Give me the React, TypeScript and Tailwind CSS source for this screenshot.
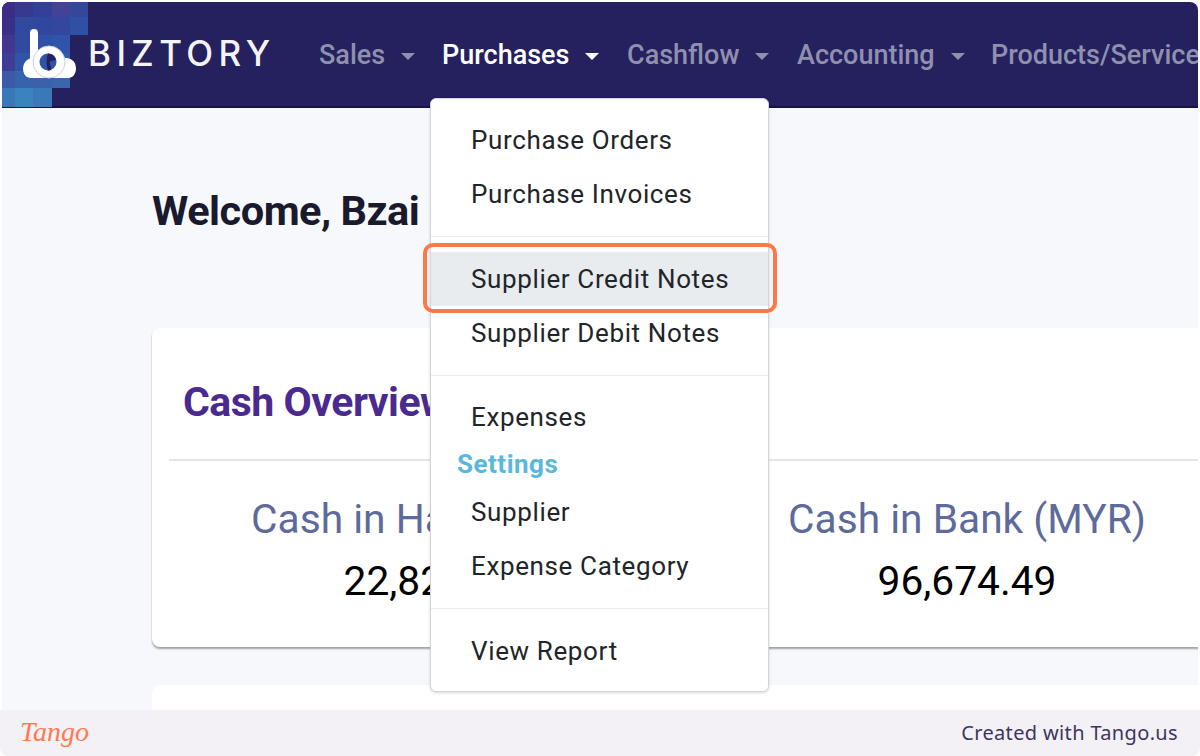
const roboto = "font-['Roboto',sans-serif]";

const mosaic = [
  { y: 2, h: 15, cols: ["#3d2c85", "#37398f", "#33409a", "#444296", "#35479b"] },
  { y: 17, h: 18, cols: ["#3b3088", "#2f4a9f", "#31479f", "#34479f", "#3050a6"] },
  { y: 35, h: 18, cols: ["#42368f", "#2f4a9f", "#2f50a6", "#3054aa"] },
  { y: 53, h: 18, cols: ["#3f3d96", "#2f55a8", "#2f58ac", "#2f5cae"] },
  { y: 71, h: 17, cols: ["#3d5aa8", "#3564ad", "#3a62ab", "#3a66ae"] },
  { y: 88, h: 19, cols: ["#3878b6", "#3a84bd", "#3a78b8"] },
];
const colX = [2, 15, 33, 52, 70];
const colW = [13, 18, 19, 18, 18];

function Mosaic() {
  return (
    <svg className="absolute left-[2px] top-[2px] rounded-tl-lg" width="88" height="105" viewBox="2 2 88 105">
      {mosaic.map((row) =>
        row.cols.map((c, i) => (
          <rect key={row.y + "-" + i} x={colX[i]} y={row.y} width={colW[i]} height={row.h} fill={c} />
        ))
      )}
    </svg>
  );
}

function LogoMark() {
  return (
    <svg className="absolute left-[22px] top-[27px]" width="56" height="54" viewBox="0 0 56 54">
      <path d="M1 41a10 10 0 0 1 10-10h34a9.500 9.500 0 0 1 9 10c0 6-3 10-8 10H9c-5 0-8-4-8-10z" fill="#fff" />
      <path d="M12 6v26" stroke="#fff" strokeWidth="8" strokeLinecap="round" fill="none" />
      <circle cx="27" cy="35" r="16" fill="#fff" stroke="#c9d0ea" strokeWidth="1" />
      <circle cx="26" cy="35" r="8.500" fill="#3054aa" />
      <path d="M26 26.500a8.500 8.500 0 0 1 8 6c-2 2-5 0-6 3s2 3 1 7.500a8.500 8.500 0 0 1-3 .5c-2-6-2-12 0-17z" fill="#25205e" />
    </svg>
  );
}

function NavItem({ label, active, className }: { label: string; active?: boolean; className: string }) {
  return (
    <div className={"flex items-center shrink-0 " + className}>
      <span className={active ? "text-white font-medium" : "text-[#8f90ae] font-medium"}>{label}</span>
      <span
        className={
          "ml-[16px] w-0 h-0 border-x-[7px] border-x-transparent border-t-[7px] mt-[2px] " +
          (active ? "border-t-white" : "border-t-[#8f90ae]")
        }
      />
    </div>
  );
}

function MenuItem({ label, hover }: { label: string; hover?: boolean }) {
  return (
    <div className={"h-[54px] flex items-center pl-[40px] " + (hover ? "bg-[#e9ecef]" : "")}>{label}</div>
  );
}

function Divider() {
  return <div className="h-px bg-[#e9ecef] my-[15px]" />;
}

export default function App() {
  return (
    <div className={"relative w-[1200px] h-[756px] overflow-hidden bg-white flex flex-col " + roboto}>
      <div className="flex-1 min-h-0 mx-[2px] mt-[2px] rounded-t-lg overflow-hidden bg-[#f7f8fc] flex flex-col">
        <header className="shrink-0 h-[106px] bg-[#25205e] border-b-2 border-[#17124e] flex items-center overflow-hidden text-[27px] whitespace-nowrap pl-[317px] pt-[3px]">
          <NavItem label="Sales" className="w-[123px]" />
          <NavItem label="Purchases" active className="w-[185px]" />
          <NavItem label="Cashflow" className="w-[170px]" />
          <NavItem label="Accounting" className="w-[194px]" />
          <NavItem label="Products/Services" className="" />
        </header>
        <main className="pl-[150px] pt-[77px]">
          <h1 className="text-[41.5px] leading-[52px] font-bold text-[#1a1a2e] tracking-[-0.5px]">Welcome, Bzai</h1>
          <section className="mt-[91px] w-[1120px] h-[319px] bg-white rounded-lg shadow-[0_2px_2px_rgba(0,0,0,0.35)] px-[17px]">
            <h2 className="h-[131px] pl-[14px] flex items-center pt-[19px] text-[41px] font-bold text-[#4b2a8f] tracking-[-0.5px]">
              Cash Overview
            </h2>
            <div className="h-[2px] bg-[#e3e5ea]" />
            <div className="flex pt-[32px] text-center">
              <div className="w-[528px]">
                <div className="text-[40.7px] leading-[52px] text-[#5e6a9b]">Cash in Hand (MYR)</div>
                <div className="text-[40.7px] leading-[52px] mt-[10px] text-black">22,820.00</div>
              </div>
              <div className="w-[540px]">
                <div className="text-[40.7px] leading-[52px] text-[#5e6a9b]">Cash in Bank (MYR)</div>
                <div className="text-[40.7px] leading-[52px] mt-[10px] text-black">96,674.49</div>
              </div>
            </div>
          </section>
          <section className="mt-[38px] w-[1120px] h-[200px] bg-white rounded-lg" />
        </main>
      </div>

      <footer className="shrink-0 h-[46px] bg-[#f3f1f6] rounded-b-lg flex items-center justify-between pl-[20px] pr-[22px]">
        <span className="font-['Liberation_Serif',serif] italic text-[28px] leading-none text-[#ff7a50] -mt-[2px]">
          Tango
        </span>
        <span className="font-['Noto_Sans',sans-serif] text-[20px] text-[#40355f] tracking-[0.35px]">
          Created with Tango.us
        </span>
      </footer>

      <Mosaic />
      <LogoMark />
      <div className="absolute left-[88px] top-[35px] font-['Inter',sans-serif] font-medium text-[35px] leading-[36px] tracking-[5.4px] text-[#f4f4f8]">
        BIZTORY
      </div>

      <div className="absolute left-[430px] top-[98px] w-[339px] h-[594px] bg-white rounded-md border border-[#d4d5d9] shadow-[0_1px_3px_rgba(0,0,0,0.15)] pt-[14px] text-[26px] text-[#212529] tracking-[0.63px]">
        <MenuItem label="Purchase Orders" />
        <MenuItem label="Purchase Invoices" />
        <Divider />
        <MenuItem label="Supplier Credit Notes" hover />
        <MenuItem label="Supplier Debit Notes" />
        <div className="h-px bg-[#e9ecef] mt-[15px] mb-[14px]" />
        <MenuItem label="Expenses" />
        <div className="h-[41px] flex items-center pl-[26px] font-bold text-[#5bb8dd] tracking-[0.5px]">Settings</div>
        <MenuItem label="Supplier" />
        <MenuItem label="Expense Category" />
        <Divider />
        <MenuItem label="View Report" />
      </div>

      <div className="absolute left-[423px] top-[243px] w-[354px] h-[70px] rounded-[10px] border-[4px] border-[#ff7848]" />
    </div>
  );
}
